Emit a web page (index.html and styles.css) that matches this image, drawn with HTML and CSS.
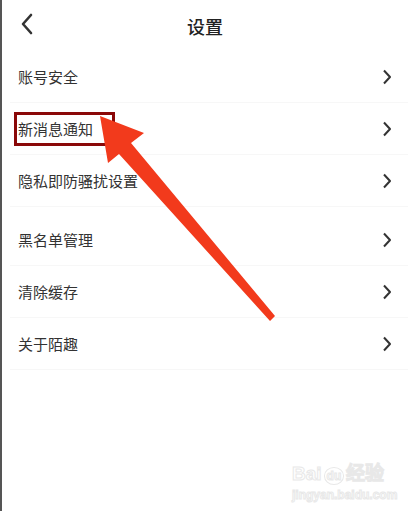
FILE: index.html
```html
<!DOCTYPE html>
<html lang="zh-CN">
<head>
  <meta charset="UTF-8">
  <meta name="viewport" content="width=device-width, initial-scale=1.0">
  <title>设置</title>
  <link rel="stylesheet" href="styles.css">
</head>
<body>
  <div class="screen">
    <header class="topbar">
      <svg class="back" width="14" height="22" viewBox="0 0 14 22">
        <polyline points="11,2 3,11 11,20" fill="none" stroke="#333" stroke-width="2.6" stroke-linecap="round" stroke-linejoin="round"/>
      </svg>
      <h1 class="title">设置</h1>
    </header>

    <ul class="list">
      <li class="row"><span>账号安全</span><svg class="chev" width="10" height="16" viewBox="0 0 10 16"><polyline points="2,1.5 8,8 2,14.5" fill="none" stroke="#333" stroke-width="2" stroke-linejoin="round"/></svg></li>
      <li class="row"><span>新消息通知</span><svg class="chev" width="10" height="16" viewBox="0 0 10 16"><polyline points="2,1.5 8,8 2,14.5" fill="none" stroke="#333" stroke-width="2" stroke-linejoin="round"/></svg></li>
      <li class="row"><span>隐私即防骚扰设置</span><svg class="chev" width="10" height="16" viewBox="0 0 10 16"><polyline points="2,1.5 8,8 2,14.5" fill="none" stroke="#333" stroke-width="2" stroke-linejoin="round"/></svg></li>
    </ul>

    <ul class="list second">
      <li class="row"><span>黑名单管理</span><svg class="chev" width="10" height="16" viewBox="0 0 10 16"><polyline points="2,1.5 8,8 2,14.5" fill="none" stroke="#333" stroke-width="2" stroke-linejoin="round"/></svg></li>
      <li class="row"><span>清除缓存</span><svg class="chev" width="10" height="16" viewBox="0 0 10 16"><polyline points="2,1.5 8,8 2,14.5" fill="none" stroke="#333" stroke-width="2" stroke-linejoin="round"/></svg></li>
      <li class="row"><span>关于陌趣</span><svg class="chev" width="10" height="16" viewBox="0 0 10 16"><polyline points="2,1.5 8,8 2,14.5" fill="none" stroke="#333" stroke-width="2" stroke-linejoin="round"/></svg></li>
    </ul>

    <!-- annotation overlay -->
    <div class="mark"></div>
    <svg class="arrow" width="408" height="511" viewBox="0 0 408 511">
      <polygon points="100,116 144,133 131,143 275,316 270,321 119,154 108,163" fill="#f23a1c"/>
    </svg>

    <div class="watermark">
      <div class="wm-logo">Bai<span class="paw">du</span>经验</div>
      <div class="wm-url">jingyan.baidu.com</div>
    </div>
  </div>
</body>
</html>
```

FILE: styles.css
```css
body {
  margin: 0;
  background: #fff;
  font-family: "Noto Sans CJK SC", "Noto Sans", sans-serif;
  color: #333;
}
.screen {
  position: relative;
  width: 406px;
  height: 511px;
  border-left: 2px solid #555;
  overflow: hidden;
}
.topbar {
  height: 51px;
  display: flex;
  align-items: center;
  justify-content: center;
  position: relative;
}
.back {
  position: absolute;
  left: 18px;
  top: 13px;
}
.title {
  margin: 0;
  font-size: 18px;
  font-weight: 500;
  color: #222;
}
.list {
  list-style: none;
  margin: 0;
  padding: 0 0 0 8px;
}
.list.second {
  margin-top: 7px;
}
.row {
  height: 51px;
  display: flex;
  align-items: center;
  justify-content: space-between;
  padding: 0 16px 0 8px;
  border-bottom: 1px solid #f7f7f7;
  font-size: 15px;
  color: #333;
}
.chev {
  display: block;
}
.mark {
  position: absolute;
  left: 12px;
  top: 112px;
  width: 95px;
  height: 28px;
  border: 3px solid #8a0808;
}
.arrow {
  position: absolute;
  left: -2px;
  top: 0;
}
.watermark {
  position: absolute;
  left: 290px;
  top: 462px;
  color: #fff;
  -webkit-text-stroke: 1px #e8e8e8;
  font-family: "Liberation Sans", sans-serif;
}
.wm-logo {
  font-size: 19px;
  font-weight: bold;
  line-height: 24px;
}
.paw {
  font-size: 12px;
  border: 1px solid #e8e8e8;
  border-radius: 50%;
  padding: 1px 2px;
  margin: 0 2px;
}
.wm-url {
  font-size: 12px;
  font-weight: bold;
  line-height: 14px;
}
```
